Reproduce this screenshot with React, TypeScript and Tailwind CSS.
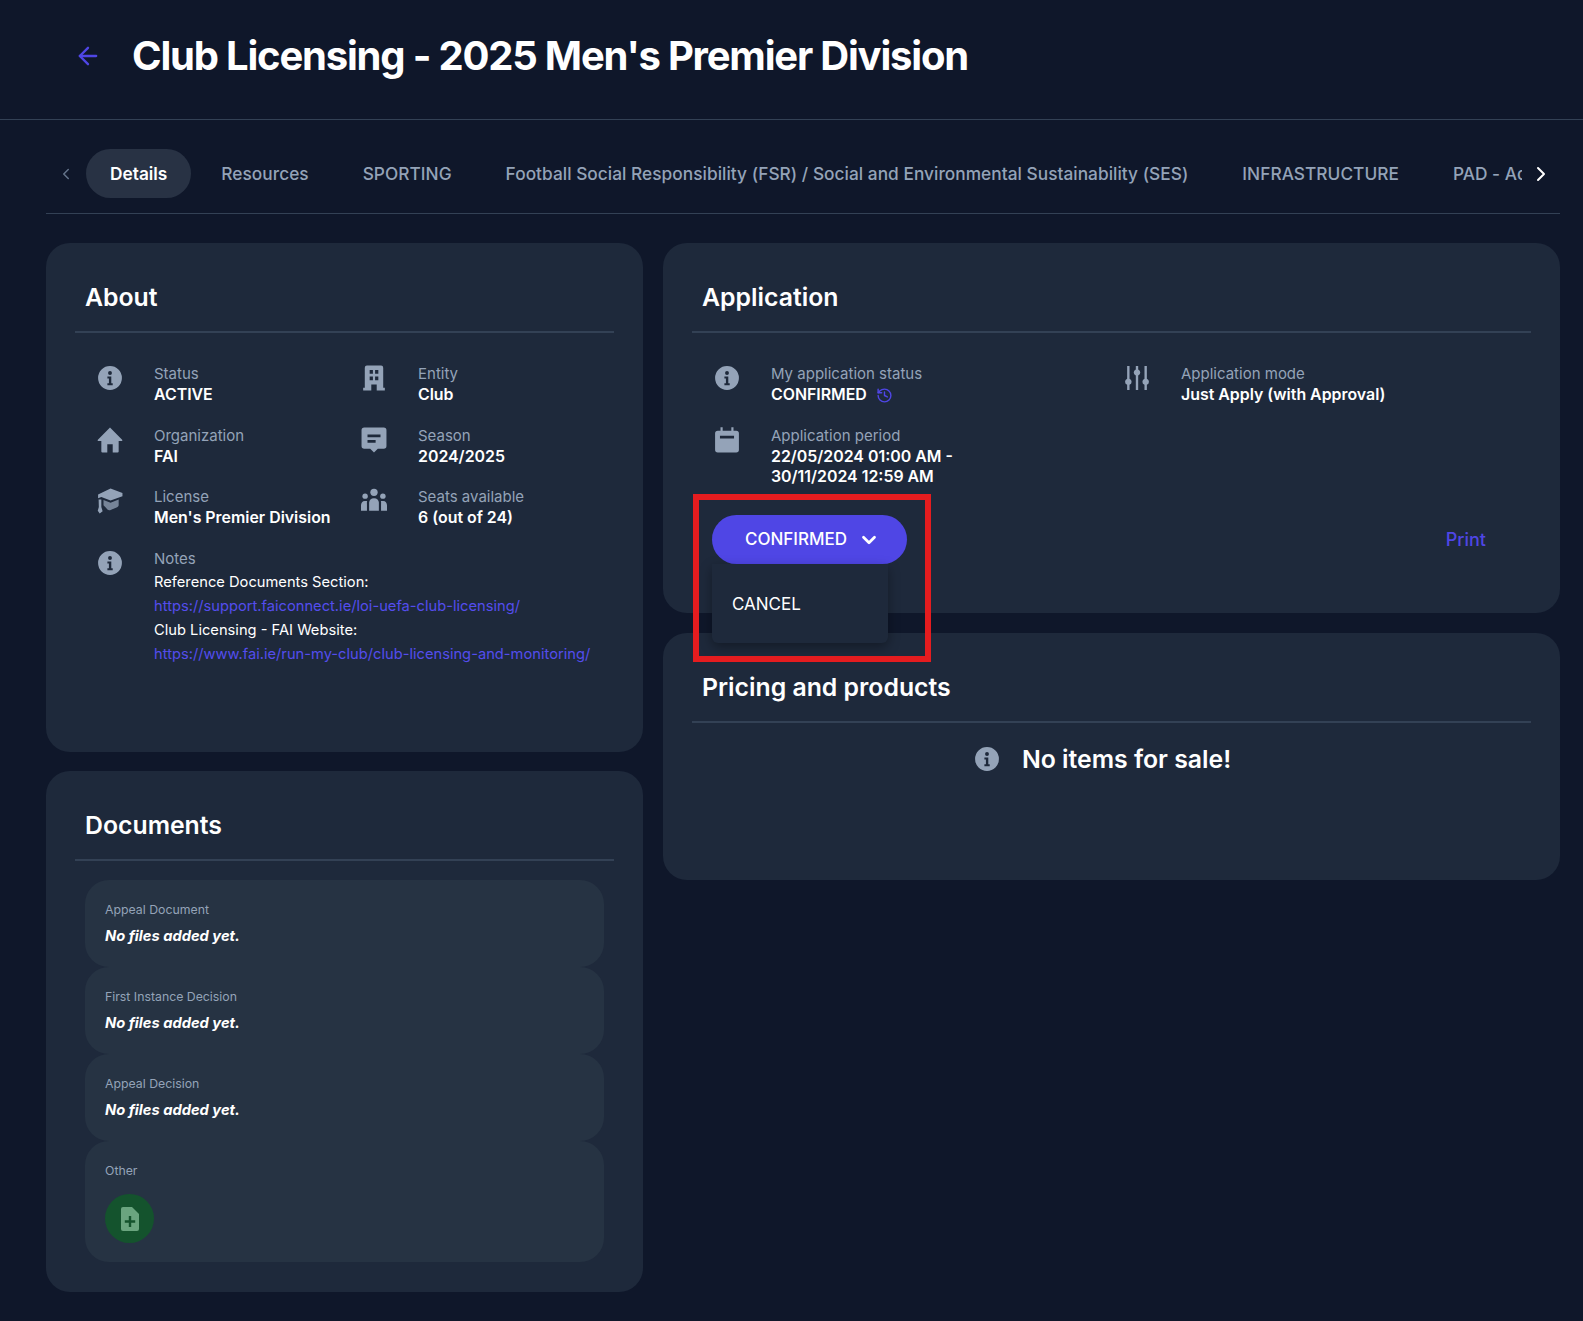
import { FC, ReactNode } from 'react';
import { ChevronDown, ChevronLeft, ChevronRight, ArrowLeft, History } from 'lucide-react';

const iconClass = "w-[26px] h-[26px] text-[#94a3b8]";

const InfoIcon: FC = () => (
  <svg viewBox="0 0 24 24" className={iconClass} fill="currentColor">
    <path fillRule="evenodd" d="M12 1a11 11 0 1 0 0 22 11 11 0 0 0 0-22Zm0 4.600a1.800 1.800 0 1 1 0 3.600 1.800 1.800 0 0 1 0-3.600ZM9.600 10.600h3.600v6.200h1.300v1.800H9.600v-1.800h1.400v-4.400H9.600v-1.800Z" />
  </svg>
);

const BuildingIcon: FC = () => (
  <svg viewBox="0 0 24 24" className={iconClass} fill="currentColor">
    <path fillRule="evenodd" d="M5.500 .5h13a2 2 0 0 1 2 2V21h1.500v2.500h-7.500V18h-5v5.500H2V21h1.500V2.500a2 2 0 0 1 2-2ZM8 4.500V8h3V4.500H8Zm5 0V8h3V4.500h-3ZM8 10.500V14h3v-3.500H8Zm5 0V14h3v-3.500h-3Z" />
  </svg>
);

const HomeIcon: FC = () => (
  <svg viewBox="0 0 24 24" className={iconClass} fill="currentColor">
    <path d="M12 .5.800 11.800c-.5.500-.2 1.200.5 1.200H4v9.500a1 1 0 0 0 1 1h4.500V16h5v7.500H19a1 1 0 0 0 1-1V13h2.700c.7 0 1-.7.5-1.200L12 .5Z" />
  </svg>
);

const CapIcon: FC = () => (
  <svg viewBox="0 0 24 24" className={iconClass} fill="currentColor">
    <path d="M12.500 .5 23.500 4.500v3L12.500 11.500 4 8.300 1 9.500V6l11.500-5.500Z" />
    <path opacity="0.75" d="M6 11l6.500 2.700 7.500-3v5c0 1-.5 1.600-1.400 2l-6 2.500c-1.700.7-3.400-.3-3.900-1.500L6 16v-5Z" />
    <path d="M1.500 10.500h2.500v7l1.200 4-2.700 2-1.800-2.500 1-3.500-.2-7Z" />
  </svg>
);

const CommentIcon: FC = () => (
  <svg viewBox="0 0 24 24" className={iconClass} fill="currentColor">
    <path fillRule="evenodd" d="M3 .5h18A2.500 2.500 0 0 1 23.500 3v14.500A2.500 2.500 0 0 1 21 20h-5.500L12 23.500 8.500 20H3A2.500 2.500 0 0 1 .5 17.500V3A2.500 2.500 0 0 1 3 .5ZM6 7v2.500h12V7H6Zm0 5v2.500h7.500V12H6Z" />
  </svg>
);

const PeopleIcon: FC = () => (
  <svg viewBox="0 0 24 24" className={iconClass} fill="currentColor">
    <circle cx="12" cy="4" r="3.400" />
    <circle cx="3.800" cy="7.500" r="2.500" />
    <circle cx="20.200" cy="7.500" r="2.500" />
    <path d="M7.500 21v-7.500c0-2.200 1.800-4 4.500-4s4.500 1.800 4.500 4V21h-9Z" />
    <path d="M0 21v-5c0-2 1.400-4 3.500-4h2.200C5.300 13 5.500 14 5.500 15.500V21H0Zm24 0v-5c0-2-1.400-4-3.500-4h-2.200c.4 1 .2 2 .2 3.500V21H24Z" />
  </svg>
);

const SlidersIcon: FC = () => (
  <svg viewBox="0 0 24 24" className={iconClass} fill="currentColor">
    <path d="M2.900 1h2.200v11.700a3 3 0 0 1 0 5.600V23H2.900v-4.700a3 3 0 0 1 0-5.600V1Z" />
    <path d="M10.900 1h2.200v3.200a3 3 0 0 1 0 5.600V23h-2.200V9.800a3 3 0 0 1 0-5.600V1Z" />
    <path d="M18.900 1h2.200v11.700a3 3 0 0 1 0 5.600V23h-2.200v-4.700a3 3 0 0 1 0-5.600V1Z" />
  </svg>
);

const CalendarIcon: FC = () => (
  <svg viewBox="0 0 24 24" className={iconClass} fill="currentColor">
    <path fillRule="evenodd" d="M6 .3h2v3.200h8V.3h2v3.200h2.500A2.500 2.500 0 0 1 23 6v15a2.500 2.500 0 0 1-2.500 2.500h-17A2.500 2.500 0 0 1 1 21V6a2.500 2.500 0 0 1 2.500-2.500H6V.3ZM5.500 8v2.500h13V8h-13Z" />
  </svg>
);

const FileAddIcon: FC = () => (
  <svg viewBox="0 0 18 24" className="w-[18px] h-[24px]">
    <path fill="#6aa57f" d="M2 0h9l7 7v15a2 2 0 0 1-2 2H2a2 2 0 0 1-2-2V2a2 2 0 0 1 2-2Z" />
    <path fill="#14532d" d="M7.800 9h2.400v4.300h4v2.400h-4V20H7.800v-4.300h-4v-2.400h4V9Z" />
  </svg>
);

const InfoItem: FC<{ icon: ReactNode; label: string; value?: ReactNode; className?: string }> = ({ icon, label, value, className }) => (
  <div className={`flex ${className ?? ""}`}>
    <div className="w-[48px] flex justify-center pt-[2px] shrink-0">{icon}</div>
    <div className="ml-[20px] min-w-0">
      <div className="text-[15px] leading-[21px] text-[#94a3b8]">{label}</div>
      {value && <div className="mt-px text-[15.900px] leading-[20.500px] font-semibold text-white">{value}</div>}
    </div>
  </div>
);

const Card: FC<{ title: string; className?: string; children: ReactNode }> = ({ title, className, children }) => (
  <section className={`bg-[#1e293b] rounded-[24px] px-[29px] ${className ?? ""}`}>
    <h2 className="pl-[10px] text-[24.800px] leading-[32px] font-semibold text-white pb-[18px] border-b-2 border-[#334155]">{title}</h2>
    {children}
  </section>
);

const DocRow: FC<{ label: string; children?: ReactNode }> = ({ label, children }) => (
  <div className="bg-[#263343] rounded-[24px] pl-[20px] pr-[19px] pt-[21px] pb-[19px] min-h-[87px]">
    <div className="text-[12.300px] leading-[18px] text-[#94a3b8]">{label}</div>
    {children ?? <div className="mt-[7px] text-[14.700px] leading-[20px] font-bold italic text-white">No files added yet.</div>}
  </div>
);

const tabs = [
  "Resources",
  "SPORTING",
  "Football Social Responsibility (FSR) / Social and Environmental Sustainability (SES)",
  "INFRASTRUCTURE",
  "PAD - Academy",
];

const App: FC = () => (
  <div className="relative min-h-[1321px] bg-[#0f172a] font-['Inter','Noto_Sans',sans-serif]">
    <header className="h-[120px] border-b border-[#334155] flex items-center pl-[74px] pb-[8px]">
      <ArrowLeft className="w-[28px] h-[28px] text-[#4f46e5]" strokeWidth={2} />
      <h1 className="ml-[30px] text-[40px] leading-[48px] font-bold tracking-[-1.200px] text-white">Club Licensing - 2025 Men's Premier Division</h1>
    </header>

    <div className="pl-[46px] pr-[23px]">
      <nav className="mt-[29px] h-[65px] border-b border-[#334155] flex items-start">
        <div className="w-[40px] h-[49px] flex items-center justify-center">
          <ChevronLeft className="w-[18px] h-[18px] text-[#64748b]" />
        </div>
        <div className="w-[1436px] overflow-hidden flex items-center gap-[6px]">
          <div className="h-[49px] px-[24px] rounded-full bg-[#283244] flex items-center text-[17.300px] font-semibold text-white shrink-0">Details</div>
          {tabs.map((tab) => (
            <div key={tab} className="h-[49px] px-[24px] flex items-center text-[17.300px] tracking-[0.030px] font-medium text-[#94a3b8] whitespace-nowrap shrink-0">{tab}</div>
          ))}
        </div>
        <div className="flex-1 h-[49px] flex items-center justify-center">
          <ChevronRight className="w-[24px] h-[24px] text-white" />
        </div>
      </nav>

      <div className="mt-[29px] flex gap-[20px] items-start">
        <div className="w-[597px] flex flex-col gap-[19px]">
          <Card title="About" className="h-[509px] pt-[38px]">
            <div className="mt-[30px] ml-[11px] grid grid-cols-[264px_1fr] gap-y-[19px]">
              <InfoItem icon={<InfoIcon />} label="Status" value="ACTIVE" />
              <InfoItem icon={<BuildingIcon />} label="Entity" value="Club" />
              <InfoItem icon={<HomeIcon />} label="Organization" value="FAI" />
              <InfoItem icon={<CommentIcon />} label="Season" value="2024/2025" />
              <InfoItem icon={<CapIcon />} label="License" value="Men's Premier Division" />
              <InfoItem icon={<PeopleIcon />} label="Seats available" value="6 (out of 24)" />
              <InfoItem
                icon={<InfoIcon />}
                label="Notes"
                className="col-span-2"
                value={
                  <div className="text-[14.700px] leading-[24px] font-normal">
                    <div>Reference Documents Section:</div>
                    <div className="text-[#544ded]">https://support.faiconnect.ie/loi-uefa-club-licensing/</div>
                    <div>Club Licensing - FAI Website:</div>
                    <div className="text-[#544ded]">https://www.fai.ie/run-my-club/club-licensing-and-monitoring/</div>
                  </div>
                }
              />
            </div>
          </Card>

          <Card title="Documents" className="h-[521px] pt-[38px]">
            <div className="mt-[19px] mx-[10px] flex flex-col">
              <DocRow label="Appeal Document" />
              <DocRow label="First Instance Decision" />
              <DocRow label="Appeal Decision" />
              <DocRow label="Other">
                <button className="mt-[14px] w-[49px] h-[49px] rounded-full bg-[#14532d] flex items-center justify-center">
                  <FileAddIcon />
                </button>
              </DocRow>
            </div>
          </Card>
        </div>

        <div className="flex-1 flex flex-col gap-[20px]">
          <Card title="Application" className="relative h-[370px] pt-[38px]">
            <div className="mt-[30px] ml-[11px] grid grid-cols-[410px_1fr] gap-y-[19px]">
              <InfoItem
                icon={<InfoIcon />}
                label="My application status"
                value={
                  <span className="flex items-center gap-[9px]">
                    CONFIRMED
                    <History className="w-[17px] h-[17px] text-[#4f46e5]" />
                  </span>
                }
              />
              <InfoItem icon={<SlidersIcon />} label="Application mode" value="Just Apply (with Approval)" />
              <InfoItem
                icon={<CalendarIcon />}
                label="Application period"
                className="col-span-2"
                value={<>22/05/2024 01:00 AM -<br />30/11/2024 12:59 AM</>}
              />
            </div>
            <div className="mt-[27px] ml-[20px] pr-[45px] flex items-center justify-between">
              <div className="relative">
                <button className="w-[195px] h-[49px] rounded-full bg-[#4f46e5] text-white text-[17px] font-medium flex items-center justify-center gap-[11px] pl-[6px] pt-[2px]">
                  CONFIRMED
                  <ChevronDown className="w-[22px] h-[22px]" strokeWidth={3} />
                </button>
                <div className="absolute z-10 top-[49px] left-0 w-[176px] h-[79px] bg-[#1e293b] rounded-b-[6px] shadow-[0_4px_12px_rgba(0,0,0,0.35)] pl-[20px] pt-[28px] text-[17px] leading-[24px] text-white">CANCEL</div>
              </div>
              <span className="text-[18px] font-medium text-[#4f46e5]">Print</span>
            </div>
          </Card>

          <Card title="Pricing and products" className="h-[247px] pt-[38px]">
            <div className="mt-[18px] pr-[18px] flex items-center justify-center">
              <InfoIcon />
              <span className="ml-[22px] text-[24.800px] leading-[36px] font-semibold text-white">No items for sale!</span>
            </div>
          </Card>
        </div>
      </div>
    </div>

    {/* annotation from the screenshot */}
    <div className="absolute z-20 left-[693px] top-[494px] w-[238px] h-[168px] border-[6px] border-[#e51c1f] pointer-events-none" />
  </div>
);

export default App;
